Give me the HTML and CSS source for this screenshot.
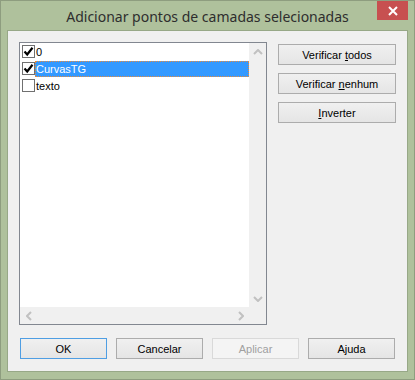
FILE: index.html
```html
<!DOCTYPE html>
<html lang="pt">
<head>
    <meta charset="UTF-8">
    <title>Adicionar pontos de camadas selecionadas</title>
    <link rel="stylesheet" href="styles.css">
</head>
<body>
    <div class="window">
        <div class="titlebar">
            <span class="title">Adicionar pontos de camadas selecionadas</span>
            <div class="close-btn">
                <svg width="10" height="10" viewBox="0 0 10 10">
                    <path d="M1 1 L9 9 M9 1 L1 9" stroke="#fff" stroke-width="2"/>
                </svg>
            </div>
        </div>

        <div class="client">
            <div class="main">
                <div class="listbox">
                    <div class="list-area">
                        <div class="items">
                            <div class="item">
                                <span class="check checked">
                                    <svg width="11" height="11" viewBox="0 0 11 11"><path d="M1.5 5.5 L4.2 8.5 L9.5 1.8" fill="none" stroke="#000" stroke-width="2.2"/></svg>
                                </span>
                                <span class="label">0</span>
                            </div>
                            <div class="item">
                                <span class="check checked">
                                    <svg width="11" height="11" viewBox="0 0 11 11"><path d="M1.5 5.5 L4.2 8.5 L9.5 1.8" fill="none" stroke="#000" stroke-width="2.2"/></svg>
                                </span>
                                <span class="label selected">CurvasTG</span>
                            </div>
                            <div class="item">
                                <span class="check"></span>
                                <span class="label">texto</span>
                            </div>
                        </div>
                        <div class="vscroll">
                            <div class="arrow">
                                <svg width="10" height="6" viewBox="0 0 10 6"><path d="M1 5 L5 1 L9 5" fill="none" stroke="#c1c1c1" stroke-width="2"/></svg>
                            </div>
                            <div class="arrow">
                                <svg width="10" height="6" viewBox="0 0 10 6"><path d="M1 1 L5 5 L9 1" fill="none" stroke="#c1c1c1" stroke-width="2"/></svg>
                            </div>
                        </div>
                    </div>
                    <div class="hscroll">
                        <div class="arrow">
                            <svg width="6" height="10" viewBox="0 0 6 10"><path d="M5 1 L1 5 L5 9" fill="none" stroke="#c1c1c1" stroke-width="2"/></svg>
                        </div>
                        <div class="arrow">
                            <svg width="6" height="10" viewBox="0 0 6 10"><path d="M1 1 L5 5 L1 9" fill="none" stroke="#c1c1c1" stroke-width="2"/></svg>
                        </div>
                        <div class="corner"></div>
                    </div>
                </div>

                <div class="side-buttons">
                    <div class="btn"><span>Verificar <u>t</u>odos</span></div>
                    <div class="btn"><span>Verificar <u>n</u>enhum</span></div>
                    <div class="btn"><span><u>I</u>nverter</span></div>
                </div>
            </div>

            <div class="footer">
                <div class="btn default"><span>OK</span></div>
                <div class="btn"><span>Cancelar</span></div>
                <div class="btn disabled"><span>Aplicar</span></div>
                <div class="btn"><span>Ajuda</span></div>
            </div>
        </div>
    </div>
</body>
</html>
```

FILE: styles.css
```css
body {
    margin: 0;
    background: #fff;
    font-family: "Liberation Sans", Arial, sans-serif;
}

.window {
    width: 415px;
    height: 380px;
    box-sizing: border-box;
    border: 1px solid #8e9d7f;
    background: #afc19c;
    padding: 0 6px 7px 6px;
    display: flex;
    flex-direction: column;
}

.titlebar {
    position: relative;
    height: 29px;
    display: flex;
    align-items: center;
    justify-content: center;
}

.title {
    font-family: "Noto Sans", "Open Sans", sans-serif;
    font-size: 14px;
    color: #2e2e2e;
    margin-top: 1px;
}

.close-btn {
    position: absolute;
    top: 0;
    right: 0;
    width: 31px;
    height: 19px;
    background: #c75050;
    display: flex;
    align-items: center;
    justify-content: center;
}

.client {
    flex: 1;
    border: 1px solid #97a887;
    background: #f0f0f0;
    padding: 11px 11px 12px 11px;
    display: flex;
    flex-direction: column;
}

.main {
    display: flex;
    gap: 11px;
}

.listbox {
    width: 248px;
    height: 283px;
    box-sizing: border-box;
    border: 1px solid #828790;
    background: #fff;
    display: flex;
    flex-direction: column;
}

.list-area {
    flex: 1;
    display: flex;
}

.items {
    flex: 1;
}

.item {
    height: 17px;
    display: flex;
    align-items: center;
    padding-left: 2px;
    font-size: 11px;
    color: #000;
}

.check {
    width: 13px;
    height: 13px;
    box-sizing: border-box;
    border: 1px solid #707070;
    background: #fff;
    display: flex;
    align-items: center;
    justify-content: center;
}

.label {
    flex: 1;
    height: 16px;
    line-height: 16px;
    padding-left: 1px;
    box-sizing: border-box;
}

.label.selected {
    background: #3399ff;
    color: #fff;
    border: 1px dotted #e98b3a;
    line-height: 14px;
    padding-left: 0;
}

.vscroll {
    width: 17px;
    background: #f0f0f0;
    display: flex;
    flex-direction: column;
    justify-content: space-between;
}

.vscroll .arrow {
    height: 17px;
    display: flex;
    align-items: center;
    justify-content: center;
}

.hscroll {
    height: 17px;
    background: #f0f0f0;
    display: flex;
}

.hscroll .arrow {
    width: 17px;
    display: flex;
    align-items: center;
    justify-content: center;
}

.hscroll .arrow:first-child {
    margin-right: auto;
}

.corner {
    width: 17px;
}

.side-buttons {
    width: 118px;
    padding-top: 2px;
    display: flex;
    flex-direction: column;
    gap: 8px;
}

.btn {
    height: 21px;
    box-sizing: border-box;
    border: 1px solid #acacac;
    background: linear-gradient(#f0f0f0, #e5e5e5);
    display: flex;
    align-items: center;
    justify-content: center;
    font-size: 11px;
    color: #000;
}

.btn.default {
    border-color: #4f9ee3;
}

.btn.disabled {
    border-color: #d9d9d9;
    background: #f4f4f4;
    color: #a0a0a0;
}

.footer {
    margin-top: 13px;
    padding: 0 1px;
    display: flex;
    justify-content: space-between;
}

.footer .btn {
    width: 87px;
}
```
